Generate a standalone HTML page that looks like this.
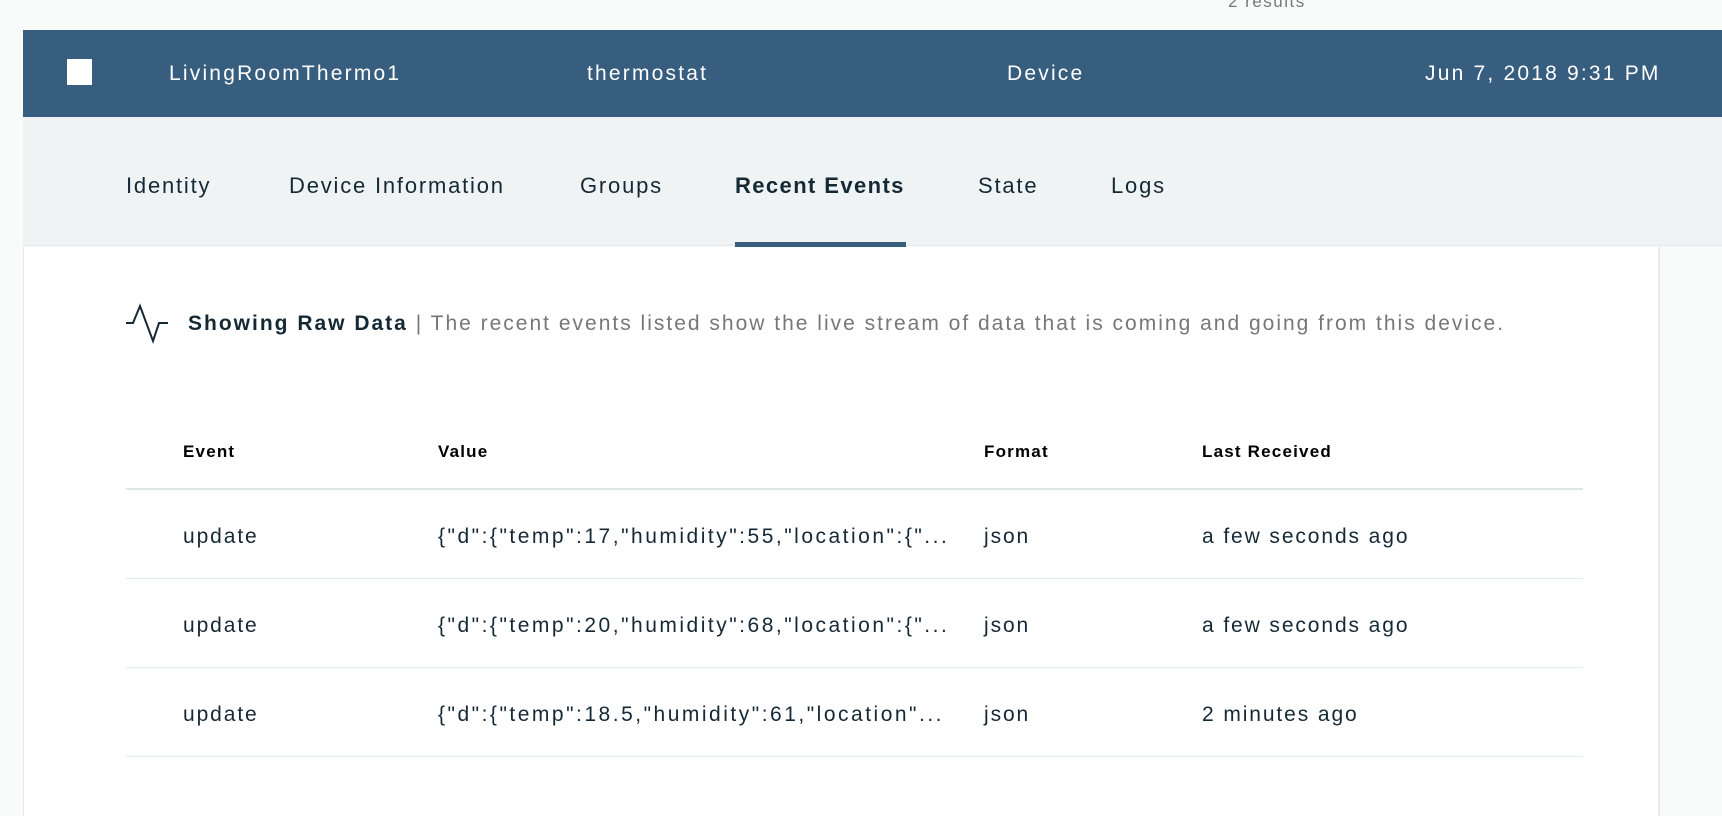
<!DOCTYPE html>
<html><head><meta charset="utf-8"><style>
*{margin:0;padding:0;box-sizing:border-box}
body{width:1722px;height:816px;background:#f9fbfb;font-family:"Liberation Sans",sans-serif;position:relative;overflow:hidden;color:#152935}
.a{position:absolute;white-space:nowrap}
.hdr{position:absolute;left:23px;top:30px;width:1699px;height:87px;background:#375d7f}
.tabs{position:absolute;left:23px;top:117px;width:1699px;height:129px;background:#eff3f4;border-bottom:1px solid #e3e9eb}
.content{position:absolute;left:23px;top:247px;width:1637px;height:569px;background:#fff;border-left:1px solid #e6ecee;border-right:2px solid #e6ecee}
.h{color:#fff;font-size:21px;top:62px;letter-spacing:2.2px}
.t{font-size:22px;top:173px;color:#152935;letter-spacing:1.8px}
.th{font-size:17px;font-weight:bold;top:442px;color:#000;letter-spacing:1.2px}
.td{font-size:21px;letter-spacing:1.9px}
.v{letter-spacing:2.5px}
.line{position:absolute;left:126px;width:1457px;height:1px;background:#e6ecee}
</style></head><body>
<div class="a" style="left:1228px;top:-8px;font-size:17px;color:#777;letter-spacing:1.5px">2 results</div>
<div class="hdr"></div>
<div class="a" style="left:67px;top:59px;width:25px;height:26px;background:#fff"></div>
<div class="a h" style="left:169px">LivingRoomThermo1</div>
<div class="a h" style="left:587px">thermostat</div>
<div class="a h" style="left:1007px">Device</div>
<div class="a h" style="left:1425px">Jun 7, 2018 9:31 PM</div>
<div class="tabs"></div>
<div class="a t" style="left:126px">Identity</div>
<div class="a t" style="left:289px">Device Information</div>
<div class="a t" style="left:580px">Groups</div>
<div class="a t" style="left:735px;font-weight:bold;letter-spacing:1.4px">Recent Events</div>
<div class="a t" style="left:978px">State</div>
<div class="a t" style="left:1111px">Logs</div>
<div class="a" style="left:735px;top:242px;width:171px;height:5px;background:#375d7f"></div>
<div class="content"></div>
<svg class="a" style="left:0;top:0" width="200" height="360"><path d="M126 323H133L140 306L153 341L159 323H168" fill="none" stroke="#152935" stroke-width="2"/></svg>
<div class="a" style="left:188px;top:312px;font-size:21px;letter-spacing:2px"><b>Showing Raw Data</b> <span style="color:#777">| The recent events listed show the live stream of data that is coming and going from this device.</span></div>
<div class="a th" style="left:183px">Event</div>
<div class="a th" style="left:438px">Value</div>
<div class="a th" style="left:984px">Format</div>
<div class="a th" style="left:1202px">Last Received</div>
<div class="line" style="top:488px;height:2px;background:#dfe6e8"></div>
<div class="a td" style="left:183px;top:525px">update</div>
<div class="a td v" style="left:438px;top:525px">{"d":{"temp":17,"humidity":55,"location":{"...</div>
<div class="a td" style="left:984px;top:525px">json</div>
<div class="a td" style="left:1202px;top:525px">a few seconds ago</div>
<div class="line" style="top:578px"></div>
<div class="a td" style="left:183px;top:614px">update</div>
<div class="a td v" style="left:438px;top:614px">{"d":{"temp":20,"humidity":68,"location":{"...</div>
<div class="a td" style="left:984px;top:614px">json</div>
<div class="a td" style="left:1202px;top:614px">a few seconds ago</div>
<div class="line" style="top:667px"></div>
<div class="a td" style="left:183px;top:703px">update</div>
<div class="a td v" style="left:438px;top:703px">{"d":{"temp":18.5,"humidity":61,"location"...</div>
<div class="a td" style="left:984px;top:703px">json</div>
<div class="a td" style="left:1202px;top:703px">2 minutes ago</div>
<div class="line" style="top:756px"></div>
</body></html>
